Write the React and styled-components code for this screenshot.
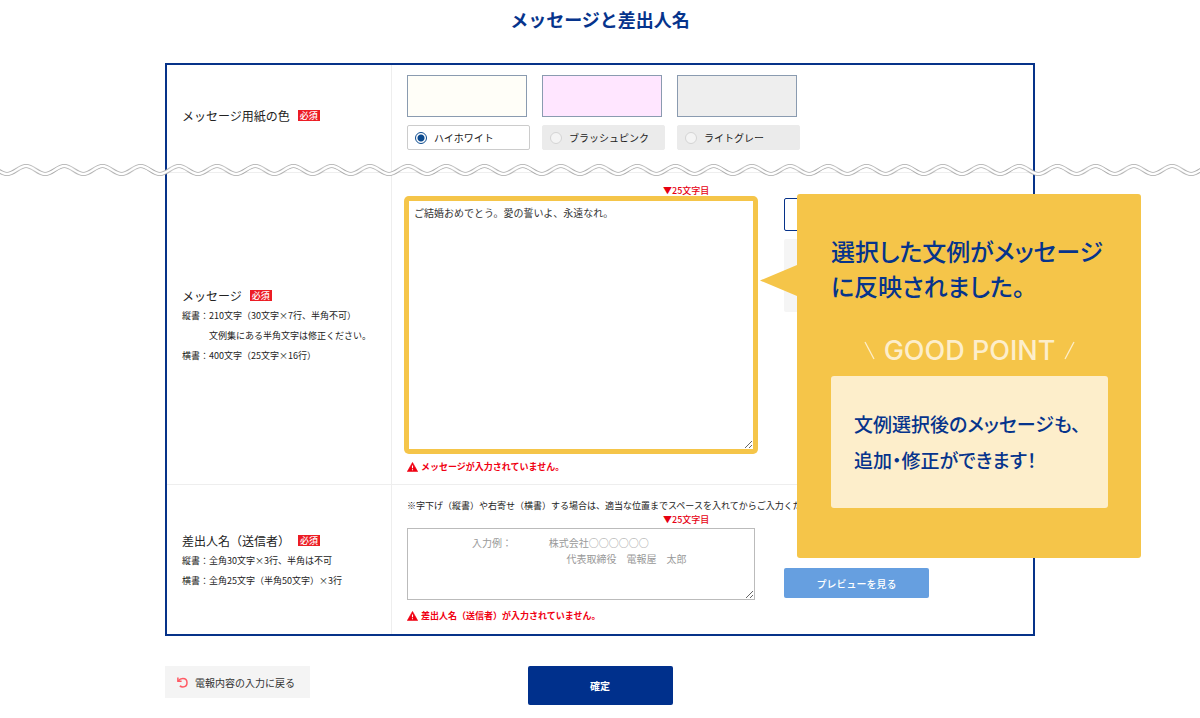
import React from 'react';
import styled, { createGlobalStyle } from 'styled-components';

const papers = [
  { id: 'white', name: 'ハイホワイト', color: '#fffef8' },
  { id: 'pink', name: 'ブラッシュピンク', color: '#ffe6ff' },
  { id: 'gray', name: 'ライトグレー', color: '#eeeeee' },
];

const senderExample =
  '　　　　　　入力例：　　　   株式会社○○○○○○\n　　　　　　　　　　　　　　　  代表取締役　電報屋　太郎';

const WarningIcon = () => (
  <svg width="11" height="10" viewBox="0 0 11 10" aria-hidden="true">
    <path d="M5.5 0.4 10.7 9.6H0.3Z" fill="#f00012" stroke="#f00012" strokeWidth="0.6" strokeLinejoin="round" />
    <path d="M5.5 3.4V6.2M5.5 7.2V8.3" stroke="#fff" strokeWidth="1.1" />
  </svg>
);

const BackIcon = () => (
  <svg width="11" height="11" viewBox="0 0 11 11" fill="none" stroke="#ff5a64" strokeWidth="1.5" aria-hidden="true">
    <path d="M0.9 0.6V4.2H4.6" />
    <path d="M1.2 4C2.4 2.3 4 1.6 5.9 1.6C8.5 1.6 10 3.5 10 5.8C10 8.3 8.2 9.9 5.8 9.9C4.5 9.9 3.5 9.5 2.8 8.9" />
  </svg>
);

const Wave = () => (
  <WaveLine aria-hidden="true">
    <defs>
      <pattern id="wave" x="7" width="38.2" height="14" patternUnits="userSpaceOnUse">
        {['#a9a9a9', '#fff'].map((stroke, i) => (
          <path
            key={stroke}
            d="M-19.1 3C-12 3 -7.1 11 0 11S12 3 19.1 3S31.1 11 38.2 11S50.2 3 57.3 3"
            fill="none"
            stroke={stroke}
            strokeWidth={i ? 2.4 : 4}
          />
        ))}
      </pattern>
    </defs>
    <rect width="100%" height="14" fill="url(#wave)" />
  </WaveLine>
);

const App = () => {
  return (
    <Page>
      <GlobalStyle />
      <Title>メッセージと差出人名</Title>
      <Wave />
      <Container>
        <Form id="telegram">
          <Row>
            <Heading $raised>
              <Name>
                <span id="paper">メッセージ用紙の色</span>
                <Required>必須</Required>
              </Name>
            </Heading>
            <Papers role="radiogroup" aria-labelledby="paper">
              {papers.map((paper, i) => (
                <div key={paper.id}>
                  <Swatch $color={paper.color} />
                  <Choice>
                    <Radio type="radio" name="paper" value={paper.id} defaultChecked={i === 0} />
                    {paper.name}
                  </Choice>
                </div>
              ))}
            </Papers>
          </Row>

          <Row>
            <Heading $raised>
              <Name>
                <label htmlFor="message">メッセージ</label>
                <Required>必須</Required>
              </Name>
              <Hint>縦書：210文字（30文字×7行、半角不可）</Hint>
              <Hint>　　　文例集にある半角文字は修正ください。</Hint>
              <Hint>横書：400文字（25文字×16行）</Hint>
            </Heading>
            <Content>
              <Columns>
                <Field>
                  <Marker>▼25文字目</Marker>
                  <Message id="message" defaultValue="ご結婚おめでとう。愛の誓いよ、永遠なれ。" />
                  <ErrorText>
                    <WarningIcon />
                    メッセージが入力されていません。
                  </ErrorText>
                </Field>
                <Side>
                  <OutlineButton type="button" />
                  <GrayPanel />
                </Side>
              </Columns>
            </Content>
          </Row>

          <Row>
            <Heading>
              <Name>
                <label htmlFor="sender">差出人名（送信者）</label>
                <Required>必須</Required>
              </Name>
              <Hint>縦書：全角30文字×3行、半角は不可</Hint>
              <Hint>横書：全角25文字（半角50文字）×3行</Hint>
            </Heading>
            <Content>
              <Note>※字下げ（縦書）や右寄せ（横書）する場合は、適当な位置までスペースを入れてからご入力ください。</Note>
              <Columns>
                <Field>
                  <Marker>▼25文字目</Marker>
                  <Sender id="sender" placeholder={senderExample} />
                  <ErrorText>
                    <WarningIcon />
                    差出人名（送信者）が入力されていません。
                  </ErrorText>
                </Field>
                <PreviewButton type="button">プレビューを見る</PreviewButton>
              </Columns>
            </Content>
          </Row>

          <Bubble>
            <BubbleTitle>
              選択した文例がメッセージ
              <br />
              に反映されました。
            </BubbleTitle>
            <GoodPoint>
              <svg width="11" height="20" viewBox="0 0 11 20" aria-hidden="true">
                <path d="M1 1 10 18" stroke="#fdeecb" strokeWidth="1.3" />
              </svg>
              GOOD POINT
              <svg width="11" height="20" viewBox="0 0 11 20" aria-hidden="true">
                <path d="M10 1 1 18" stroke="#fdeecb" strokeWidth="1.3" />
              </svg>
            </GoodPoint>
            <Tip>
              文例選択後のメッセージも、
              <br />
              追加・修正ができます！
            </Tip>
          </Bubble>
        </Form>

        <Actions>
          <BackButton type="button">
            <BackIcon />
            電報内容の入力に戻る
          </BackButton>
          <SubmitButton type="submit" form="telegram">確定</SubmitButton>
        </Actions>
      </Container>
    </Page>
  );
};

const GlobalStyle = createGlobalStyle`
  *, *::before, *::after {
    box-sizing: border-box;
  }

  body {
    margin: 0;
    background: #fff;
    color: #222;
    font-family: "Noto Sans CJK JP", sans-serif;
    font-size: 12px;
    overflow-x: hidden;
  }

  button, textarea, input {
    font-family: inherit;
    margin: 0;
  }
`;

const Page = styled.main`
  position: relative;
`;

const Title = styled.h1`
  margin: 0 0 24px;
  color: #06348c;
  font-size: 18px;
  font-weight: 700;
  line-height: 39px;
  text-align: center;
`;

const WaveLine = styled.svg`
  position: absolute;
  top: 163px;
  left: 0;
  z-index: 1;
  width: 100%;
  height: 14px;
`;

const Container = styled.div`
  max-width: 870px;
  margin: 0 auto;
`;

const Form = styled.form`
  position: relative;
  border: 2px solid #063289;
`;

const Row = styled.section`
  display: grid;
  grid-template-columns: 225px 1fr;

  & + & {
    border-top: 1px solid #eee;
  }
`;

const Heading = styled.div`
  display: flex;
  flex-direction: column;
  justify-content: center;
  padding: ${(props) => (props.$raised ? '0 0 6px' : '2px 0 0')} 15px;
  border-right: 1px solid #eee;
`;

const Name = styled.div`
  display: flex;
  align-items: center;
  gap: 8px;
  line-height: 20px;
`;

const Required = styled.span`
  padding: 0 2px;
  background: #ec1c24;
  color: #fff;
  font-size: 9px;
  font-weight: 500;
  line-height: 11px;
`;

const Hint = styled.div`
  font-size: 9px;
  line-height: 20px;
  white-space: nowrap;
`;

const Papers = styled.div`
  display: flex;
  gap: 12px;
  padding: 10px 15px 22px;
`;

const Swatch = styled.div`
  width: 120px;
  height: 42px;
  margin-bottom: 8px;
  border: 1px solid #8a9bb0;
  background: ${(props) => props.$color};
`;

const Choice = styled.label`
  display: flex;
  align-items: center;
  gap: 7px;
  width: 123px;
  height: 25px;
  padding: 0 7px;
  border: 1px solid #ebebeb;
  border-radius: 2px;
  background: #ebebeb;
  font-size: 10px;

  &:has(:checked) {
    border-color: #ccc;
    background: #fff;
  }
`;

const Radio = styled.input`
  appearance: none;
  width: 12px;
  height: 12px;
  border: 1px solid #d4d4d4;
  border-radius: 50%;
  background: #f4f4f4;

  &:checked {
    border-color: #0b4a8f;
    background: radial-gradient(#0b4a8f 3px, #fff 4px);
  }
`;

const Content = styled.div`
  min-width: 0;
  padding: 11px 0 10px 15px;

  ${Row}:last-of-type & {
    padding-bottom: 11px;
  }
`;

const Columns = styled.div`
  display: flex;
  gap: 29px;
`;

const Field = styled.div`
  width: 348px;
`;

const Note = styled.p`
  margin: 0;
  padding-top: 2px;
  font-size: 9px;
  line-height: 15px;
  white-space: nowrap;
`;

const Marker = styled.div`
  padding: 0 0 1px 256px;
  color: #e60012;
  font-size: 9px;
  font-weight: 500;
  line-height: 14px;
`;

const TextBox = styled.textarea`
  display: block;
  width: 100%;
  color: #333;
  font-size: 10px;
  line-height: 16px;
  outline: none;
  resize: both;
`;

const Message = styled(TextBox)`
  height: 252px;
  padding: 4px 5px;
  border: 2px solid #f5c549;
  border-radius: 2px;
  box-shadow: 0 0 0 3px #f5c549;
`;

const Sender = styled(TextBox)`
  height: 72px;
  padding: 6px 4px;
  border: 1px solid #bbb;

  &::placeholder {
    color: #999;
  }
`;

const ErrorText = styled.p`
  display: flex;
  align-items: center;
  gap: 3px;
  margin: 8px 0 0;
  color: #f00012;
  font-size: 9px;
  font-weight: 700;
  line-height: 15px;
`;

const Side = styled.div`
  display: grid;
  align-content: start;
  gap: 8px;
  width: 145px;
  padding-top: 14px;
`;

const OutlineButton = styled.button`
  height: 33px;
  border: 1px solid #063289;
  border-radius: 2px;
  background: #fff;
`;

const GrayPanel = styled.div`
  height: 73px;
  border-radius: 2px;
  background: #f5f5f5;
`;

const PreviewButton = styled.button`
  align-self: flex-end;
  width: 145px;
  height: 30px;
  margin-bottom: 25px;
  border: 0;
  border-radius: 2px;
  background: #669fe0;
  color: #fff;
  font-size: 10px;
  font-weight: 500;
`;

const Bubble = styled.aside`
  position: absolute;
  top: 129px;
  right: -108px;
  z-index: 2;
  width: 344px;
  padding: 39px 33px 50px 34px;
  border-radius: 3px;
  background: #f5c549;
  color: #06348c;
  font-feature-settings: "palt";

  &::before {
    content: '';
    position: absolute;
    top: 71px;
    right: 100%;
    width: 37px;
    height: 31px;
    background: inherit;
    clip-path: polygon(100% 0, 100% 100%, 0 50%);
  }
`;

const BubbleTitle = styled.p`
  margin: 0 0 30px;
  font-size: 24px;
  font-weight: 500;
  line-height: 35px;
  white-space: nowrap;
`;

const GoodPoint = styled.div`
  display: flex;
  align-items: center;
  justify-content: center;
  gap: 9px;
  margin-bottom: 8px;
  color: #fdeecb;
  font-family: Inter, "Liberation Sans", sans-serif;
  font-size: 27px;
  font-weight: 500;
  line-height: 35px;
`;

const Tip = styled.p`
  margin: 0;
  padding: 30px 23px;
  border-radius: 3px;
  background: #fdeecb;
  font-size: 19px;
  font-weight: 500;
  line-height: 36px;
  white-space: nowrap;
`;

const Actions = styled.div`
  display: grid;
  grid-template-columns: 1fr auto 1fr;
  align-items: start;
  margin-top: 30px;
`;

const BackButton = styled.button`
  display: flex;
  align-items: center;
  justify-self: start;
  gap: 7px;
  width: 145px;
  height: 32px;
  padding: 0 12px;
  border: 0;
  background: #f4f4f4;
  color: #333;
  font-size: 10px;
  white-space: nowrap;
`;

const SubmitButton = styled.button`
  width: 145px;
  height: 39px;
  border: 0;
  border-radius: 2px;
  background: #00308c;
  color: #fff;
  font-size: 10px;
  font-weight: 700;
`;

export default App;
